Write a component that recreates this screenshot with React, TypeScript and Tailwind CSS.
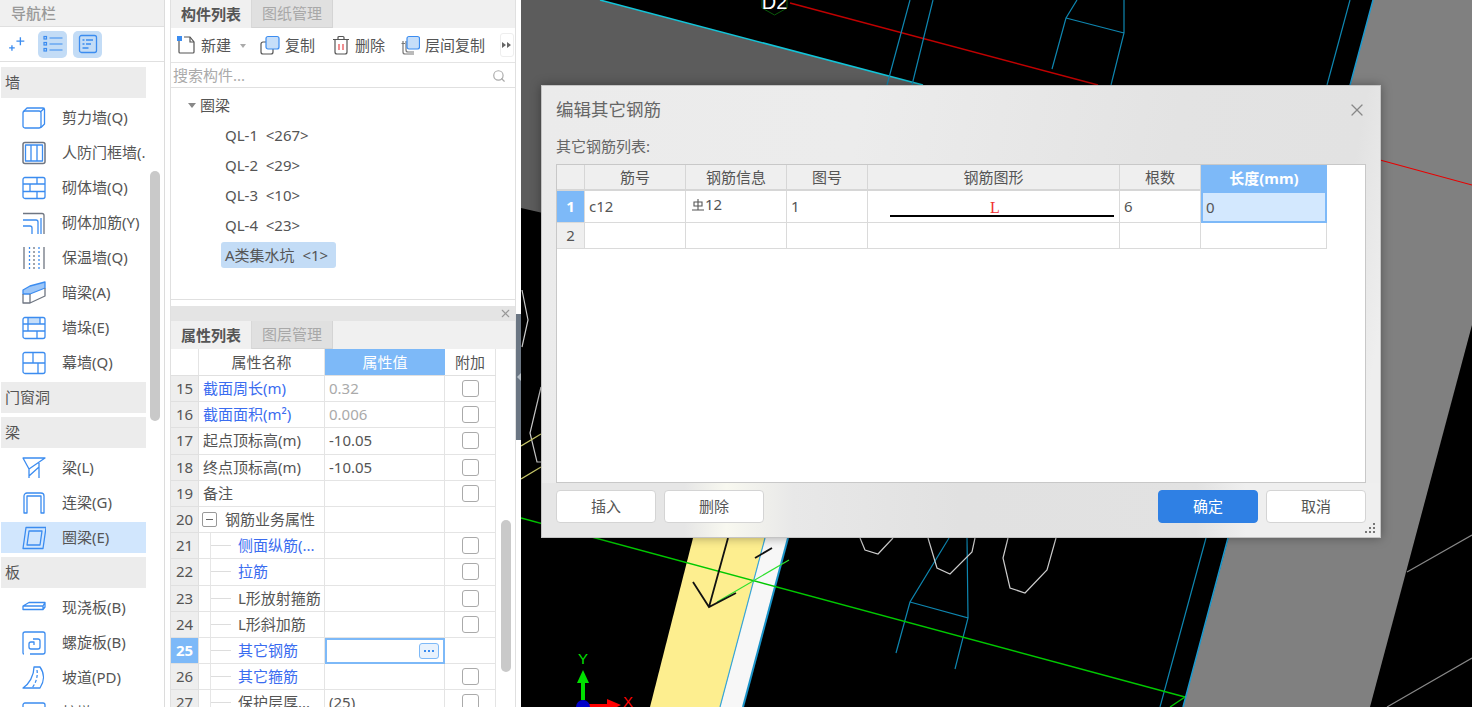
import React from "react";
import { Search, X } from "lucide-react";

const B = "#3b8cf0";
const G = "#6f7682";

function I({ children }: { children: React.ReactNode }) {
  return (
    <svg width="24" height="24" viewBox="0 0 24 24" fill="none" stroke={B} strokeWidth="1.3" strokeLinejoin="round" className="shrink-0">
      {children}
    </svg>
  );
}

const icons: Record<string, React.ReactNode> = {
  shear: (<I><rect x="1" y="5" width="18" height="17" rx="2" /><path d="M1.5 5.5 5 2h16a1.500 1.500 0 0 1 1.500 1.500V18l-3.500 3.500M19 5.500 22.500 2" /></I>),
  frame: (<I><rect x="1" y="1.500" width="22" height="21" rx="2" stroke={G} strokeWidth="1.500" /><path d="M3.500 4h17v16h-17zM9 4v16M15 4v16" /></I>),
  brick: (<I><rect x="1" y="1.500" width="22" height="21" rx="2" /><path d="M1 8h22M1 15.500h22M15 1.500V8M8 8v7.500M15 15.500v7" /></I>),
  rebar: (<I><path d="M1 2.500h19a2 2 0 0 1 2 2V23" stroke={G} /><path d="M1 9h13a2 2 0 0 1 2 2v12M1 15h7a2 2 0 0 1 2 2v6" /><path d="M19 7v16" /></I>),
  insul: (<I><path d="M2 1v22M22 1v22" stroke={G} /><path d="M7.500 1v22M17 1v22" strokeDasharray="2 2" /><path d="M12 1v22" stroke={G} strokeDasharray="2 2" /></I>),
  dark: (<I><path d="M1 9 8 5l15-4v6L8 13H1z" fill="#9cc6f8" /><path d="M1 13v9h7l15-7V7M8 13v9" stroke={G} /></I>),
  pier: (<I><path d="M6 1.500h12v6h-12z" fill="#c6def9" stroke="none" /><rect x="1" y="1.500" width="22" height="21" rx="2" /><path d="M1 8h5M18 8h5M6 1.500V8h12V1.500M1 15h22M15 15v7.500M6 8v7" /></I>),
  curtain: (<I><rect x="1" y="1.500" width="22" height="21" rx="2" /><path d="M1 12h22M11 1.500V12M16 12v10.500" /></I>),
  beam: (<I><path d="M1 2h22L7 13zM7 13v9M17 7v15M7 20l10-9" /></I>),
  link: (<I><path d="M2 22V5a3 3 0 0 1 3-3h14a3 3 0 0 1 3 3v17h-3V5H5v17z" /></I>),
  ring: (<I><path d="M4 1.500h20L21 22.500H1z" /><path d="M7 5h13l-2 14H5z" /></I>),
  slab: (<I><path d="M1 10 7 6.500h16V11l-2 2.500H1zM1 10h20l2-3.500M21 10v3.500" /></I>),
  spiral: (<I><path d="M2 23a1 1 0 0 1-1-1V3a2 2 0 0 1 2-2h18a2 2 0 0 1 2 2v18a2 2 0 0 1-2 2H8" /><path d="M11 8h5a2 2 0 0 1 2 2v6a2 2 0 0 1-2 2H9a2 2 0 0 1-2-2v-3a2 2 0 0 1 2-2h3v3" /></I>),
  ramp: (<I><path d="M12 1h6c5 7 4 15 0 21H1c6-4 11-12 11-21z" /><path d="M15 4c1 6-1 13-5 18" strokeDasharray="3 2" /></I>),
  more: (<I><rect x="1" y="2" width="22" height="21" rx="2" /><path d="M1 7h22" /></I>),
};

function Section({ label }: { label: string }) {
  return <div className="flex h-[31px] shrink-0 items-center bg-[#ececec] pl-[4px] text-[#555]">{label}</div>;
}

function NavItem({ icon, label, active }: { icon: string; label: string; active?: boolean }) {
  return (
    <div className={`flex h-[31px] shrink-0 items-center gap-[16px] pl-[21px] whitespace-nowrap overflow-hidden text-[#555] ${active ? "bg-[#d1e6fd]" : ""}`}>
      {icons[icon]}
      <span>{label}</span>
    </div>
  );
}

function Nav() {
  return (
    <div className="relative flex h-full w-[165px] shrink-0 flex-col border-r border-[#dcdcdc] bg-white">
      <div className="flex h-[26px] shrink-0 items-center bg-[#f0f0f0] pl-[11px] font-medium text-[#999]">导航栏</div>
      <div className="flex h-[36px] shrink-0 items-center border-y border-[#e0e0e0]">
        <svg width="18" height="18" viewBox="0 0 16 16" stroke={B} strokeWidth="1.200" className="ml-[8px]">
          <path d="M11 2v7M7.500 5.500h7M3.500 9v5M1 11.500h5" />
        </svg>
        <div className="ml-[12px] flex h-[27px] w-[29px] items-center justify-center rounded-[5px] bg-[#c3dcf6]">
          <svg width="20" height="18" viewBox="0 0 20 18" fill="none" stroke={B} strokeWidth="1.200">
            <rect x="1" y="1.500" width="2.500" height="2.500" />
            <rect x="1" y="7.500" width="2.500" height="2.500" />
            <rect x="1" y="13.500" width="2.500" height="2.500" />
            <path d="M6.500 3h13M6.500 9h13M6.500 15h13" />
          </svg>
        </div>
        <div className="ml-[6px] flex h-[27px] w-[29px] items-center justify-center rounded-[5px] bg-[#c3dcf6]">
          <svg width="20" height="20" viewBox="0 0 20 20" fill="none" stroke={B} strokeWidth="1.300">
            <rect x="1.500" y="1.500" width="17" height="17" rx="2" />
            <path d="M4.500 6h2M8 6h7M4.500 10h2M8 10h5M4.500 14h6" />
          </svg>
        </div>
      </div>
      <div className="flex w-[146px] flex-col gap-1 overflow-hidden pt-[5px] pl-px">
        <Section label="墙" />
        <NavItem icon="shear" label="剪力墙(Q)" />
        <NavItem icon="frame" label="人防门框墙(." />
        <NavItem icon="brick" label="砌体墙(Q)" />
        <NavItem icon="rebar" label="砌体加筋(Y)" />
        <NavItem icon="insul" label="保温墙(Q)" />
        <NavItem icon="dark" label="暗梁(A)" />
        <NavItem icon="pier" label="墙垛(E)" />
        <NavItem icon="curtain" label="幕墙(Q)" />
        <Section label="门窗洞" />
        <Section label="梁" />
        <NavItem icon="beam" label="梁(L)" />
        <NavItem icon="link" label="连梁(G)" />
        <NavItem icon="ring" label="圈梁(E)" active />
        <Section label="板" />
        <NavItem icon="slab" label="现浇板(B)" />
        <NavItem icon="spiral" label="螺旋板(B)" />
        <NavItem icon="ramp" label="坡道(PD)" />
        <NavItem icon="more" label="柱墩(X)" />
      </div>
      <div className="absolute top-[171px] left-[150px] h-[250px] w-[10px] rounded-[5px] bg-[#c9c9c9]" />
    </div>
  );
}

function Tabs({ a, b }: { a: string; b: string }) {
  return (
    <div className="flex h-[28px] shrink-0 bg-[#f0f0f0]">
      <div className="flex w-[81px] items-center justify-center border-r border-[#d8d8d8] font-bold text-[#555]">{a}</div>
      <div className="flex w-[81px] items-center justify-center border-r border-b border-[#d4d4d4] bg-[#e0e0e0] text-[#a8a8a8]">{b}</div>
    </div>
  );
}

function Toolbar() {
  return (
    <div className="flex h-[35px] shrink-0 items-center border-b border-[#e4e4e4] bg-white text-[#555]">
      <svg width="20" height="20" viewBox="0 0 20 20" fill="none" stroke="#555" strokeWidth="1.200" className="ml-[5px]">
        <path d="M3 5v12a1 1 0 0 0 1 1h13a1 1 0 0 0 1-1V7l-4-5H8" />
        <path d="M14 2v5h4" />
        <rect x="1" y="1" width="5" height="5" fill={B} stroke="none" />
      </svg>
      <span className="ml-[5px]">新建</span>
      <span className="mt-[2px] ml-[9px] h-0 w-0 border-x-[3px] border-t-[4px] border-x-transparent border-t-[#aaa]" />
      <svg width="20" height="20" viewBox="0 0 20 20" fill="none" stroke="#555" strokeWidth="1.200" className="ml-[14px]">
        <path d="M6 7H3a2 2 0 0 0-2 2v8a2 2 0 0 0 2 2h8a2 2 0 0 0 2-2v-3" />
        <rect x="6" y="1.500" width="13" height="12.500" rx="2" fill="#c6def9" stroke={B} />
      </svg>
      <span className="ml-[5px]">复制</span>
      <svg width="18" height="20" viewBox="0 0 18 20" fill="none" stroke="#555" strokeWidth="1.200" className="ml-[17px]">
        <path d="M1 4.500h16M6 4.500V2.500a1 1 0 0 1 1-1h4a1 1 0 0 1 1 1v2M3 4.500V17a2 2 0 0 0 2 2h8a2 2 0 0 0 2-2V4.500" />
        <path d="M7 9v6M11 9v6" stroke="#e8454a" />
      </svg>
      <span className="ml-[5px]">删除</span>
      <svg width="20" height="20" viewBox="0 0 20 20" fill="none" stroke="#555" strokeWidth="1.200" className="ml-[15px]">
        <path d="M3 6v11a2 2 0 0 0 2 2h9M5 8.500H1.500" stroke="#777" />
        <path d="M6 6v9a2 2 0 0 0 2 2h6" stroke="#777" />
        <rect x="7" y="1.500" width="12.500" height="12.500" rx="2" fill="#c6def9" stroke={B} />
      </svg>
      <span className="ml-[5px]">层间复制</span>
      <div className="ml-[15px] flex h-[24px] w-[14px] items-center justify-center rounded-[3px] border border-[#eeeeee] text-[9px] leading-none text-[#666]">
        <svg width="10" height="8" viewBox="0 0 10 8" fill="#666"><path d="M0 1l4 3-4 3zM5 1l4 3-4 3z" /></svg>
      </div>
    </div>
  );
}

function Tree() {
  const items = ["QL-1  <267>", "QL-2  <29>", "QL-3  <10>", "QL-4  <23>"];
  return (
    <div className="flex h-[213px] shrink-0 flex-col border-y border-[#e0e0e0] bg-white text-[#555]">
      <div className="flex h-[30px] shrink-0 items-center pt-[5px] pl-[17px]">
        <span className="h-0 w-0 border-x-[4px] border-t-[5px] border-x-transparent border-t-[#888]" />
        <span className="ml-[4px]">圈梁</span>
      </div>
      <div className="flex flex-col pt-[2px] pl-[50px]">
        {items.map((t) => (
          <div key={t} className="flex h-[30px] items-center pl-[4px] whitespace-pre">{t}</div>
        ))}
        <div className="mt-[2px] flex h-[26px] w-[115px] items-center rounded-[3px] bg-[#c3dcf6] pl-[4px] whitespace-pre">{"A类集水坑  <1>"}</div>
      </div>
    </div>
  );
}

function Check() {
  return <span className="h-[17px] w-[17px] rounded-[3px] border-[1.500px] border-[#aaaaaa] bg-white" />;
}

type Row = { n: number; name: string; val?: string; blue?: boolean; grey?: boolean; child?: boolean; group?: boolean; noCheck?: boolean; edit?: boolean };
const rows: Row[] = [
  { n: 15, name: "截面周长(m)", val: "0.32", blue: true, grey: true },
  { n: 16, name: "截面面积(m²)", val: "0.006", blue: true, grey: true },
  { n: 17, name: "起点顶标高(m)", val: "-10.05" },
  { n: 18, name: "终点顶标高(m)", val: "-10.05" },
  { n: 19, name: "备注" },
  { n: 20, name: "钢筋业务属性", group: true, noCheck: true },
  { n: 21, name: "侧面纵筋(...", blue: true, child: true },
  { n: 22, name: "拉筋", blue: true, child: true },
  { n: 23, name: "L形放射箍筋", child: true },
  { n: 24, name: "L形斜加筋", child: true },
  { n: 25, name: "其它钢筋", blue: true, child: true, noCheck: true, edit: true },
  { n: 26, name: "其它箍筋", blue: true, child: true },
  { n: 27, name: "保护层厚...", val: "(25)", child: true },
];

function PropTable() {
  return (
    <div className="relative flex-1 overflow-hidden bg-white text-[#555]">
      <div className="grid h-[27px] w-[325px] grid-cols-[28px_126px_120px_51px] border-b border-[#e0e0e0]">
        <div className="border-r border-[#e4e4e4]" />
        <div className="flex items-center justify-center border-r border-[#e4e4e4]">属性名称</div>
        <div className="flex items-center justify-center bg-[#7db9f8] text-white">属性值</div>
        <div className="flex items-center justify-center border-r border-[#e4e4e4]">附加</div>
      </div>
      {rows.map((r) => (
        <div key={r.n} className="grid h-[26.2px] w-[325px] grid-cols-[28px_126px_120px_51px]">
          <div className={`flex items-center justify-center border-r border-b border-[#e0e0e0] ${r.edit ? "bg-[#7db9f8] font-bold text-white" : "bg-[#eeeeee]"}`}>{r.n}</div>
          <div className={`flex items-center overflow-hidden border-r border-b border-[#e4e4e4] whitespace-nowrap ${r.blue ? "text-[#3a6cf0]" : ""}`}>
            {r.child ? (
              <>
                <span className="ml-[11px] h-full w-px bg-[#e6e6e6]" />
                <span className="h-px w-[20px] bg-[#dddddd]" />
                <span className="ml-[7px]">{r.name}</span>
              </>
            ) : r.group ? (
              <>
                <span className="ml-[3px] flex h-[15px] w-[15px] items-center justify-center rounded-[2px] border border-[#999]">
                  <span className="h-px w-[7px] bg-[#666]" />
                </span>
                <span className="ml-[8px]">{r.name}</span>
              </>
            ) : (
              <span className="ml-[4px]">{r.name}</span>
            )}
          </div>
          {r.edit ? (
            <div className="flex items-center justify-end border-2 border-[#7db9f8] bg-white pr-[4px]">
              <span className="flex h-[16px] w-[20px] items-center justify-center gap-[2px] rounded-[3px] border border-[#7db9f8] bg-[#e8f2fd]">
                <span className="h-[2px] w-[2px] bg-[#3b8cf0]" />
                <span className="h-[2px] w-[2px] bg-[#3b8cf0]" />
                <span className="h-[2px] w-[2px] bg-[#3b8cf0]" />
              </span>
            </div>
          ) : (
            <div className={`flex items-center border-r border-b border-[#e4e4e4] pl-[4px] ${r.grey ? "text-[#aaaaaa]" : ""}`}>{r.val}</div>
          )}
          <div className="flex items-center justify-center border-r border-b border-[#e4e4e4]">{!r.noCheck && <Check />}</div>
        </div>
      ))}
      <div className="absolute top-[171px] left-[330px] h-[152px] w-[10px] rounded-[5px] bg-[#c9c9c9]" />
    </div>
  );
}

function Middle() {
  return (
    <div className="ml-[5px] flex h-full w-[346px] shrink-0 flex-col border-x border-[#e0e0e0] bg-white">
      <Tabs a="构件列表" b="图纸管理" />
      <Toolbar />
      <div className="flex h-[24px] shrink-0 items-center justify-between bg-white pt-[1px] pr-[9px] pl-[2px] text-[#aaaaaa]">
        <span>搜索构件...</span>
        <Search size={14} stroke="#aaaaaa" strokeWidth={2} />
      </div>
      <Tree />
      <div className="h-[6px] shrink-0 bg-white" />
      <div className="flex h-[15px] shrink-0 items-center justify-end bg-[#e4e4e4] pr-[3px]">
        <X size={13} stroke="#999" />
      </div>
      <Tabs a="属性列表" b="图层管理" />
      <PropTable />
    </div>
  );
}

function Strip() {
  return (
    <div className="flex h-full w-[5px] shrink-0 flex-col bg-white pt-[314px]">
      <div className="flex h-[126px] items-center justify-center bg-[#6b7683]">
        <span className="h-0 w-0 border-y-[4px] border-r-[4px] border-y-transparent border-r-[#b8c0c8]" />
      </div>
    </div>
  );
}

function CanvasArt() {
  return (
    <svg width="951" height="707" viewBox="521 0 951 707" className="absolute inset-0" fill="none">
      <polygon points="521,0 600,0 923,85 923,300 521,208" fill="#5c5c5c" />
      <polygon points="1373,0 1472,0 1472,325 1370,707 1183,707" fill="#808080" />
      <polygon points="693,538 765,538 720,707 650,707" fill="#fdee8f" />
      <polygon points="765,538 788,538 743,707 720,707" fill="#f7f7f7" />
      <path d="M600 0 923 85" stroke="#12c4d8" strokeWidth="1.500" />
      <path d="M1373 0 1228 538 1183 707" stroke="#1a9bd0" strokeWidth="1.500" />
      <path d="M788 538 743 707" stroke="#1a93c8" strokeWidth="2" />
      <path d="M765 538 720 707" stroke="#3ba8d8" strokeWidth="1.200" />
      <path d="M790 3 1098 85" stroke="#c00000" strokeWidth="1.400" />
      <path d="M1380 160 1472 185" stroke="#e80000" strokeWidth="1.200" />
      <g stroke="#0e86b0" strokeWidth="1.200">
        <path d="M910 0 887 85M933 0 912 85M1077 0 1066 18 1052 69M1066 18 1124 33M1124 0 1124 33 1111 85M1350 0 1327 85" />
        <path d="M949 538 910 602 896 653M910 602 968 618 955 669M967 538 968 618M1206 538 1160 707" />
      </g>
      <g stroke="#cccccc" strokeWidth="1.200">
        <path d="M860 538 865 550 878 554 893 538M928 538 937 568 950 574 972 552 975 538M1008 538 1003 558 1010 588 1025 593 1047 570 1056 538" />
        <path d="M522 290 528 320 522 347M541 387 530 433 537 462 541 462" />
      </g>
      <path d="M521 446 541 434M521 479 541 467" stroke="#c8c86a" strokeWidth="1.400" />
      <path d="M521 518 1185 697" stroke="#00c800" strokeWidth="1.400" />
      <path d="M1185 697 1170 707" stroke="#00c800" strokeWidth="1.400" />
      <path d="M717 602 789 560" stroke="#2ee02e" strokeWidth="1.200" />
      <path d="M728 538 709 607M693 582 709 607 736 593M755 558 772 548" stroke="#111" strokeWidth="1.800" />
      <path d="M1472 535 1407 572M1472 658 1387 707" stroke="#888" strokeWidth="1.200" />
      <polygon points="762,-5 787,-5 787,8 774.500,15 762,8" fill="#000" stroke="#0a5a0a" />
      <text x="774.500" y="9" textAnchor="middle" fill="#fff" fontSize="20" fontFamily="Liberation Sans, sans-serif">D2</text>
      <path d="M583 682V700" stroke="#00e000" strokeWidth="4" />
      <polygon points="583,670 577,683 589,683" fill="#00e000" />
      <path d="M589 706H608" stroke="#ff0000" strokeWidth="4" />
      <polygon points="621,705 607,699 607,712" fill="#ff0000" />
      <circle cx="583" cy="707" r="7" fill="#0000c8" />
      <text x="583" y="664" textAnchor="middle" fill="#00e000" fontSize="15" fontFamily="Liberation Sans, sans-serif">Y</text>
      <text x="628" y="707" textAnchor="middle" fill="#ff0000" fontSize="15" fontFamily="Liberation Sans, sans-serif">X</text>
    </svg>
  );
}

const colHead = ["", "筋号", "钢筋信息", "图号", "钢筋图形", "根数"];
const gridCols = "grid w-[770px] grid-cols-[28px_101px_101px_81px_252px_81px_126px]";
const line = "border-r border-b border-[#dadada]";

function RebarTable() {
  return (
    <div className="h-[319px] shrink-0 border border-[#c8c8c8] bg-white text-[#555]">
      <div className={`${gridCols} h-[26px]`}>
        {colHead.map((h, i) => (
          <div key={i} className="flex items-center justify-center border-r border-b-2 border-[#d6d6d6] bg-[#efefef]">{h}</div>
        ))}
        <div className="flex items-center justify-center bg-[#7db9f8] font-bold text-white">长度(mm)</div>
      </div>
      <div className={`${gridCols} h-[32px]`}>
        <div className="flex items-center justify-center border-r border-b border-[#dadada] bg-[#7db9f8] font-bold text-white">1</div>
        <div className={`flex items-center pl-[4px] ${line}`}>c12</div>
        <div className={`flex items-center pb-[4px] pl-[5px] ${line}`}>
          <svg width="14" height="13" viewBox="0 0 14 13" fill="none" stroke="#555" strokeWidth="1.100">
            <path d="M3 4h8v4H3zM7 1v11M1 12h12" />
          </svg>
          <span>12</span>
        </div>
        <div className={`flex items-center pl-[4px] ${line}`}>1</div>
        <div className={`flex flex-col items-center justify-end pb-[5px] pl-[16px] ${line}`}>
          <span className="mr-[13px] font-['Liberation_Serif',serif] text-[16px] leading-[15px] text-[#f03030]">L</span>
          <span className="block h-[2px] w-[224px] bg-black" />
        </div>
        <div className={`flex items-center pl-[4px] ${line}`}>6</div>
        <div className="flex items-center border-2 border-[#7db9f8] bg-[#d3e8fe] pl-[3px]">0</div>
      </div>
      <div className={`${gridCols} h-[26px]`}>
        <div className={`flex items-center justify-center bg-[#efefef] ${line}`}>2</div>
        <div className={line} />
        <div className={line} />
        <div className={line} />
        <div className={line} />
        <div className={line} />
        <div className={line} />
      </div>
    </div>
  );
}

function DlgButton({ label, primary }: { label: string; primary?: boolean }) {
  return (
    <button className={`h-[33px] w-[100px] rounded-[4px] border ${primary ? "border-[#2f80e4] bg-[#2f80e4] text-white" : "border-[#d4d4d4] bg-white text-[#555]"}`}>
      {label}
    </button>
  );
}

function Dialog() {
  return (
    <div className="absolute top-[85px] left-[20px] flex h-[453px] w-[840px] flex-col border border-[#c4c4c4] bg-[linear-gradient(100deg,#ebebeb_0%,#ececec_35%,#e3e3e3_70%,#e2e2e2_90%,#eeeeee_96%)] text-[#555] shadow-[0_0_10px_rgba(0,0,0,0.35)]">
      <div className="flex h-[48px] shrink-0 items-center justify-between pr-[13px] pl-[14px]">
        <span className="text-[17.500px] text-[#666]">编辑其它钢筋</span>
        <X size={20} stroke="#888" strokeWidth={1.500} />
      </div>
      <div className="flex h-[30px] shrink-0 items-start pt-[5px] pl-[14px] text-[#666]">其它钢筋列表:</div>
      <div className="shrink-0 px-[14px]">
        <RebarTable />
      </div>
      <div className="relative flex flex-1 items-start justify-between bg-[linear-gradient(90deg,#e6e6e6_0%,#e6e6e6_17%,#f8f8f0_22%,#e8e8e8_30%,#e1e1e1_50%,#e2e2e2_78%,#efefef_84%)] pt-[7px] pr-[14px] pl-[14px]">
        <div className="flex gap-[8px]">
          <DlgButton label="插入" />
          <DlgButton label="删除" />
        </div>
        <div className="flex gap-[8px]">
          <DlgButton label="确定" primary />
          <DlgButton label="取消" />
        </div>
        <svg width="11" height="11" viewBox="0 0 11 11" fill="#777" className="absolute right-[4px] bottom-[3px]">
          <rect x="8" y="0" width="2" height="2" />
          <rect x="4" y="4" width="2" height="2" />
          <rect x="8" y="4" width="2" height="2" />
          <rect x="0" y="8" width="2" height="2" />
          <rect x="4" y="8" width="2" height="2" />
          <rect x="8" y="8" width="2" height="2" />
        </svg>
      </div>
    </div>
  );
}

export default function App() {
  return (
    <div className="flex h-[707px] w-[1472px] overflow-hidden bg-white font-['Noto_Sans','Noto_Sans_CJK_SC',sans-serif] text-[15px] leading-none">
      <Nav />
      <Middle />
      <Strip />
      <div className="relative h-full flex-1 overflow-hidden bg-black">
        <CanvasArt />
        <Dialog />
      </div>
    </div>
  );
}
